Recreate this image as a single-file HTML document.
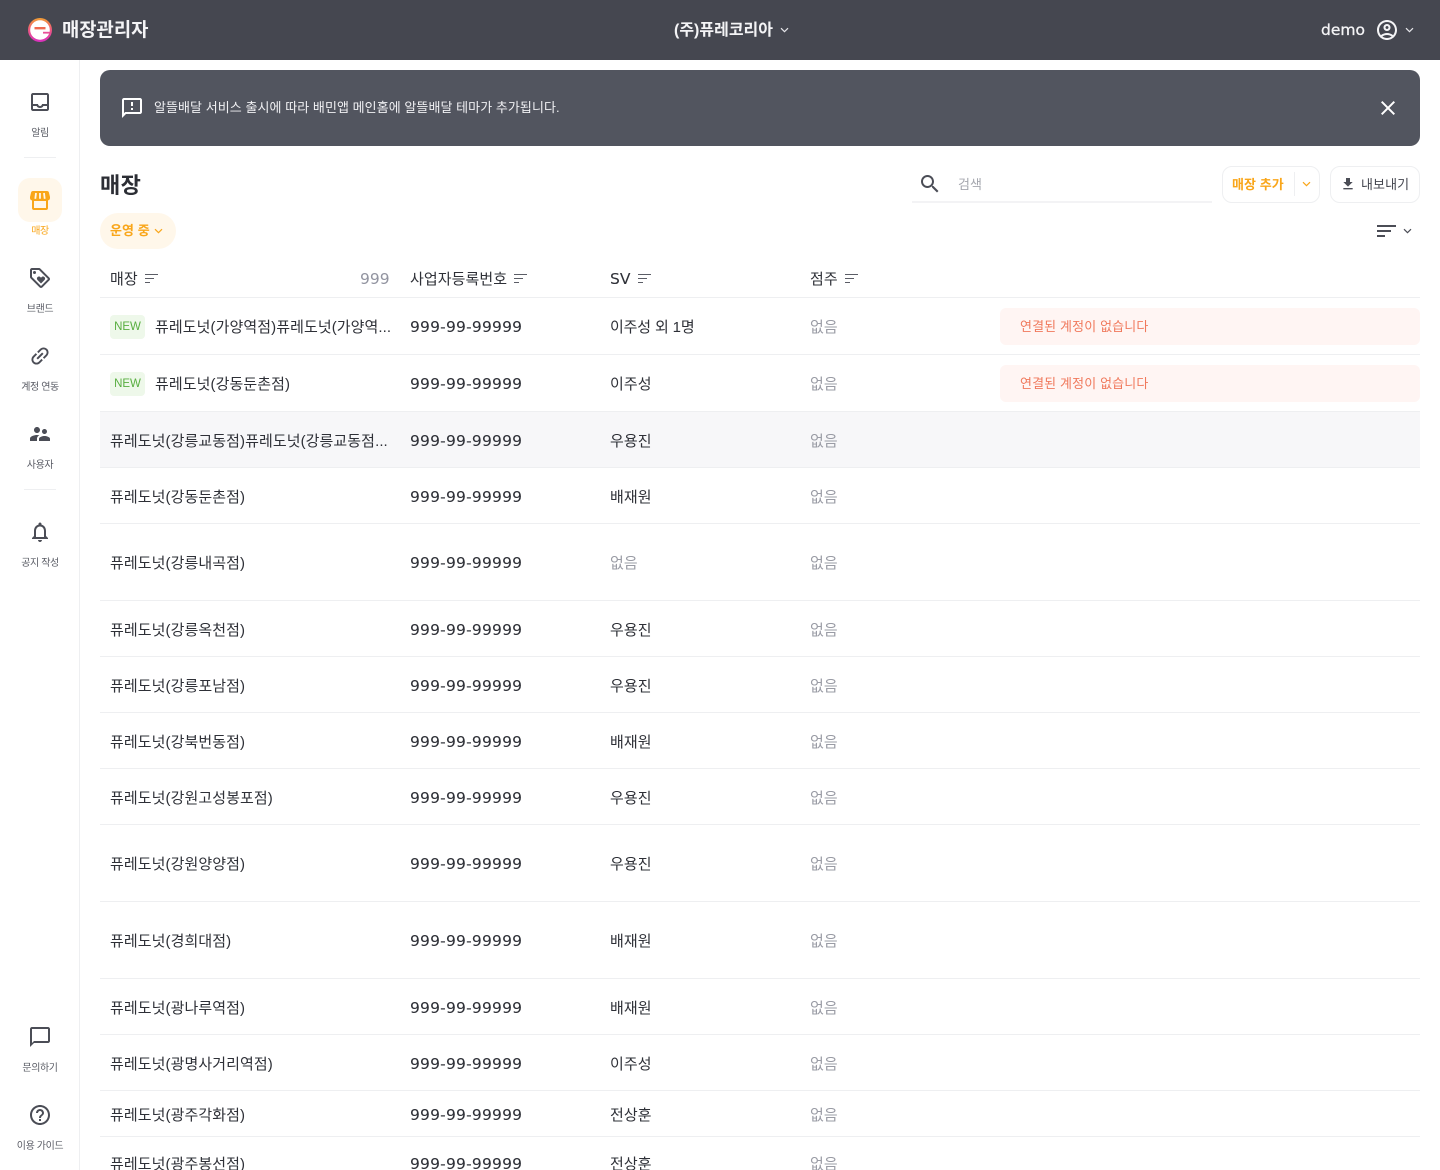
<!DOCTYPE html>
<html lang="ko"><head><meta charset="utf-8"><title>매장관리자</title>
<style>
html{margin:0;padding:0;width:1440px;height:1170px;overflow:hidden;background:#fff}
body{margin:0;padding:0;background:#fff;width:1440px;height:1170px;position:relative;overflow:hidden;font-family:"Liberation Sans","Noto Sans CJK KR",sans-serif;color:#2e3037}
#p{left:0;top:0;width:1440px;height:1170px;overflow:hidden}
div,span,svg{position:absolute}
.t{font-size:15px;line-height:24px;white-space:nowrap;font-family:"Liberation Sans","Noto Sans CJK KR",sans-serif;margin-top:2px;letter-spacing:.08px}
.n{font-size:15.5px;line-height:24px;white-space:nowrap;font-family:"DejaVu Sans",sans-serif;letter-spacing:.2px;left:410px;margin-top:1px;-webkit-text-stroke:.06px #2e3037}
.g{color:#9a9ca5}
.c1{left:110px}.c3{left:610px}.c4{left:810px}
.hr{left:100px;width:1320px;height:1px;background:#eeeff1}
.sl{width:80px;left:0;text-align:center;font-size:10px;line-height:14px;color:#5a5c65;letter-spacing:-.4px;font-family:"Noto Sans CJK KR",sans-serif;white-space:nowrap}
.si{left:28px;width:24px;height:24px;fill:#4b4d56}
.new{left:110px;width:35px;height:24px;border-radius:4px;background:#eef8ea;color:#58ae40;font-size:11.5px;line-height:24px;text-align:center}
.al{left:1000px;width:420px;height:37px;border-radius:6px;background:#fff5f3}
.al span{left:20px;top:6px;color:#f0795c;font-size:13px;line-height:24px;letter-spacing:.13px;white-space:nowrap;font-family:"Noto Sans CJK KR",sans-serif}
.ch{fill:none;stroke-width:1.2}
.bar{background:#5b5d66;height:1px}
</style></head><body><div id="p">

<div style="left:0;top:0;width:1440px;height:60px;background:#454750"></div>
<svg style="left:28px;top:18px" width="24" height="24" viewBox="0 0 24 24"><defs><linearGradient id="lg" x1="0" y1="0" x2="0" y2="1"><stop offset="0" stop-color="#f2a033"/><stop offset=".45" stop-color="#ef5d7a"/><stop offset="1" stop-color="#d92fc0"/></linearGradient></defs><circle cx="12" cy="12" r="12" fill="url(#lg)"/><circle cx="12" cy="12" r="9.800" fill="#fff"/><rect x="6.500" y="9" width="11" height="2.400" fill="#ef6a50"/><rect x="15" y="13.800" width="7" height="1.800" fill="#e8509a"/></svg>
<div class="t" style="left:62px;top:15px;font-size:18.800px;line-height:26px;font-weight:700;color:#f4f4f6;letter-spacing:0">매장관리자</div>
<div class="t" style="left:674px;top:17px;font-size:16px;font-weight:700;color:#f4f4f6;letter-spacing:0">(주)퓨레코리아</div>
<svg style="left:779px;top:25px" width="11" height="10" viewBox="0 0 11 10"><path class="ch" stroke="#e6e6ea" d="M2 3.200l3.500 3.500 3.500-3.500"/></svg>
<div style="left:1321px;top:18px;font-size:15.500px;line-height:24px;font-family:'DejaVu Sans',sans-serif;color:#f4f4f6;-webkit-text-stroke:.3px #f4f4f6">demo</div>
<svg style="left:1375px;top:18px" width="24" height="24" viewBox="0 0 24 24" fill="#f4f4f6"><path d="M12 2C6.480 2 2 6.480 2 12s4.480 10 10 10 10-4.480 10-10S17.520 2 12 2zM7.350 18.500C8.660 17.560 10.260 17 12 17s3.340.56 4.650 1.500C15.340 19.440 13.740 20 12 20s-3.340-.56-4.650-1.500zm10.790-1.380C16.450 15.800 14.320 15 12 15s-4.450.8-6.140 2.120C4.700 15.730 4 13.950 4 12c0-4.420 3.580-8 8-8s8 3.580 8 8c0 1.950-.7 3.730-1.860 5.120z"/><path d="M12 6c-1.930 0-3.500 1.570-3.500 3.500S10.070 13 12 13s3.500-1.570 3.500-3.500S13.930 6 12 6zm0 5c-.83 0-1.500-.67-1.500-1.500S11.170 8 12 8s1.500.67 1.500 1.500S12.830 11 12 11z"/></svg>
<svg style="left:1404px;top:25px" width="11" height="10" viewBox="0 0 11 10"><path class="ch" stroke="#e6e6ea" d="M2 3.200l3.500 3.500 3.500-3.500"/></svg>

<div style="left:79px;top:60px;width:1px;height:1110px;background:#eeeff1"></div>
<svg class="si" style="top:90px" viewBox="0 0 24 24"><path d="M19 3H5c-1.100 0-2 .9-2 2v14c0 1.100.9 2 2 2h14c1.100 0 2-.9 2-2V5c0-1.100-.9-2-2-2zm0 16H5v-3h3.560c.69 1.190 1.970 2 3.440 2s2.750-.81 3.440-2H19v3zm0-5h-4.990c0 1.100-.9 2-2 2s-2-.9-2-2H5V5h14v9z"/></svg>
<div class="sl" style="top:125px">알림</div>
<div style="left:24px;top:157px;width:32px;height:1px;background:#eeeff1"></div>
<div style="left:18px;top:178px;width:44px;height:44px;border-radius:12px;background:#fff7ea"></div>
<svg class="si" style="top:188px;fill:#f9a61a" viewBox="0 0 24 24"><path d="M5 3h14a2 2 0 0 1 1.900 1.400L22 9v1a2.500 2.500 0 0 1-2 2.400V20a2 2 0 0 1-2 2H6a2 2 0 0 1-2-2v-7.600A2.500 2.500 0 0 1 2 10V9l1.100-4.600A2 2 0 0 1 5 3z"/><rect x="6" y="13" width="12" height="7" fill="#fff7ea"/><path d="M8 5 7.300 10.800M12 5v5.800M16 5l.7 5.800" stroke="#fff7ea" stroke-width="1.800" fill="none"/></svg>
<div class="sl" style="top:223px;color:#f9a61a">매장</div>
<svg class="si" style="top:266px" viewBox="0 0 24 24"><path d="M21.410 11.580l-9-9C12.050 2.220 11.550 2 11 2H4c-1.100 0-2 .9-2 2v7c0 .55.22 1.050.59 1.420l9 9c.36.36.86.58 1.410.58s1.050-.22 1.410-.59l7-7c.37-.36.59-.86.59-1.410s-.23-1.060-.59-1.420zM13 20.010L4 11V4h7v-.01l9 8.990-7 7.030z"/><circle cx="6.500" cy="6.500" r="1.500"/><path d="M8.900 12.550c0 .57.23 1.070.6 1.450l3.500 3.500 3.500-3.500c.37-.37.6-.89.6-1.450 0-1.130-.92-2.050-2.050-2.050-.57 0-1.080.23-1.450.61l-.6.6-.6-.59c-.37-.38-.89-.61-1.450-.61-1.130 0-2.050.92-2.050 2.040z"/></svg>
<div class="sl" style="top:301px">브랜드</div>
<svg class="si" style="top:344px" viewBox="0 0 24 24"><path transform="rotate(-45 12 12)" d="M3.900 12c0-1.710 1.390-3.100 3.100-3.100h4V7H7c-2.760 0-5 2.240-5 5s2.240 5 5 5h4v-1.900H7c-1.710 0-3.100-1.390-3.100-3.100zM8 13h8v-2H8v2zm9-6h-4v1.900h4c1.710 0 3.100 1.390 3.100 3.100s-1.390 3.100-3.100 3.100h-4V17h4c2.760 0 5-2.240 5-5s-2.240-5-5-5z"/></svg>
<div class="sl" style="top:379px">계정 연동</div>
<svg class="si" style="top:422px" viewBox="0 0 24 24"><path d="M16.500 12c1.380 0 2.490-1.120 2.490-2.500S17.880 7 16.500 7C15.120 7 14 8.120 14 9.500s1.120 2.500 2.500 2.500zM9 11c1.660 0 2.990-1.340 2.990-3S10.660 5 9 5C7.340 5 6 6.340 6 8s1.340 3 3 3zm7.500 3c-1.830 0-5.500.92-5.500 2.750V19h11v-2.250c0-1.830-3.670-2.750-5.500-2.750zM9 13c-2.330 0-7 1.170-7 3.500V19h7v-2.250c0-.85.33-2.340 2.370-3.470C10.500 13.100 9.660 13 9 13z"/></svg>
<div class="sl" style="top:457px">사용자</div>
<div style="left:24px;top:489px;width:32px;height:1px;background:#eeeff1"></div>
<svg class="si" style="top:520px" viewBox="0 0 24 24"><path d="M12 22c1.100 0 2-.9 2-2h-4c0 1.100.9 2 2 2zm6-6v-5c0-3.070-1.630-5.640-4.500-6.320V4c0-.83-.67-1.500-1.500-1.500s-1.500.67-1.500 1.500v.68C7.640 5.360 6 7.920 6 11v5l-2 2v1h16v-1l-2-2zm-2 1H8v-6c0-2.480 1.510-4.500 4-4.500s4 2.020 4 4.500v6z"/></svg>
<div class="sl" style="top:555px">공지 작성</div>
<svg class="si" style="top:1025px" viewBox="0 0 24 24"><path d="M20 2H4c-1.100 0-2 .9-2 2v18l4-4h14c1.100 0 2-.9 2-2V4c0-1.100-.9-2-2-2zm0 14H6l-2 2V4h16v12z"/></svg>
<div class="sl" style="top:1060px">문의하기</div>
<svg class="si" style="top:1103px" viewBox="0 0 24 24"><path d="M11 18h2v-2h-2v2zm1-16C6.480 2 2 6.480 2 12s4.480 10 10 10 10-4.480 10-10S17.520 2 12 2zm0 18c-4.410 0-8-3.590-8-8s3.590-8 8-8 8 3.590 8 8-3.590 8-8 8zm0-14c-2.210 0-4 1.790-4 4h2c0-1.100.9-2 2-2s2 .9 2 2c0 2-3 1.750-3 5h2c0-2.250 3-2.500 3-5 0-2.210-1.790-4-4-4z"/></svg>
<div class="sl" style="top:1138px">이용 가이드</div>

<div style="left:100px;top:70px;width:1320px;height:76px;border-radius:10px;background:#52555f"></div>
<svg style="left:120px;top:96px" width="24" height="24" viewBox="0 0 24 24" fill="#fff"><path d="M20 2H4c-1.100 0-1.990.9-1.990 2L2 22l4-4h14c1.100 0 2-.9 2-2V4c0-1.100-.9-2-2-2zm0 14H5.170L4 17.170V4h16v12zM11 12h2v2h-2zm0-6h2v4h-2z"/></svg>
<div class="t" style="left:154px;top:94px;font-size:13px;color:#f0f0f3;letter-spacing:.06px">알뜰배달 서비스 출시에 따라 배민앱 메인홈에 알뜰배달 테마가 추가됩니다.</div>
<svg style="left:1376px;top:96px" width="24" height="24" viewBox="0 0 24 24" fill="#fff"><path d="M19 6.410L17.590 5 12 10.590 6.410 5 5 6.410 10.590 12 5 17.590 6.410 19 12 13.410 17.590 19 19 17.590 13.410 12z"/></svg>

<div class="t" style="left:100px;top:168px;font-size:22px;line-height:32px;font-weight:700;color:#2c2e35;letter-spacing:.4px">매장</div>
<svg style="left:918px;top:172px;fill:#4b4d56" width="24" height="24" viewBox="0 0 24 24"><path d="M15.500 14h-.79l-.28-.27C15.410 12.590 16 11.110 16 9.500 16 5.910 13.090 3 9.500 3S3 5.910 3 9.500 5.910 16 9.500 16c1.610 0 3.090-.59 4.230-1.570l.27.28v.79l5 4.990L20.490 19l-4.990-5zm-6 0C7.010 14 5 11.990 5 9.500S7.010 5 9.500 5 14 7.010 14 9.500 11.990 14 9.500 14z"/></svg>
<div class="t g" style="left:958px;top:171px;font-size:13px;color:#a5a7ae">검색</div>
<div style="left:912px;top:201px;width:300px;height:2px;background:#f3f3f5"></div>
<div style="left:1222px;top:166px;width:96px;height:35px;border:1px solid #eeeff1;border-radius:10px"></div>
<div class="t" style="left:1232px;top:171px;font-size:13px;font-weight:700;color:#f9a61a">매장 추가</div>
<div style="left:1294px;top:172px;width:1px;height:24px;background:#eeeff1"></div>
<svg style="left:1301px;top:179px" width="11" height="10" viewBox="0 0 11 10"><path class="ch" stroke="#f9a61a" d="M2 3.200l3.500 3.500 3.500-3.500"/></svg>
<div style="left:1330px;top:166px;width:88px;height:35px;border:1px solid #eeeff1;border-radius:10px"></div>
<svg style="left:1340px;top:176px;fill:#4b4d56" width="16" height="16" viewBox="0 0 24 24"><path d="M5 20h14v-2H5v2zM19 9h-4V3H9v6H5l7 7 7-7z"/></svg>
<div class="t" style="left:1361px;top:171px;font-size:13px;color:#44464f">내보내기</div>

<div style="left:100px;top:213px;width:76px;height:36px;border-radius:18px;background:#fff7ea"></div>
<div class="t" style="left:110px;top:217px;font-size:13px;font-weight:700;color:#f9a61a">운영 중</div>
<svg style="left:153px;top:226px" width="11" height="10" viewBox="0 0 11 10"><path class="ch" stroke="#f9a61a" d="M2 3.200l3.500 3.500 3.500-3.500"/></svg>
<div style="left:1377px;top:225px;width:19px;height:2px;background:#4b4d56"></div>
<div style="left:1377px;top:230px;width:14px;height:2px;background:#4b4d56"></div>
<div style="left:1377px;top:235px;width:8px;height:2px;background:#4b4d56"></div>
<svg style="left:1402px;top:226px" width="11" height="10" viewBox="0 0 11 10"><path class="ch" stroke="#4b4d56" d="M2 3.200l3.500 3.500 3.500-3.500"/></svg>

<div class="t" style="left:110px;top:266px">매장</div>
<div class="bar" style="left:145px;top:274px;width:13px"></div><div class="bar" style="left:145px;top:278px;width:9px"></div><div class="bar" style="left:145px;top:282px;width:5px"></div>
<div class="n" style="left:360px;top:266px;color:#9294a0;letter-spacing:0;-webkit-text-stroke:0">999</div>
<div class="t" style="left:410px;top:266px">사업자등록번호</div>
<div class="bar" style="left:514px;top:274px;width:13px"></div><div class="bar" style="left:514px;top:278px;width:9px"></div><div class="bar" style="left:514px;top:282px;width:5px"></div>
<div class="n" style="left:610px;top:266px;letter-spacing:0">SV</div>
<div class="bar" style="left:638px;top:274px;width:13px"></div><div class="bar" style="left:638px;top:278px;width:9px"></div><div class="bar" style="left:638px;top:282px;width:5px"></div>
<div class="t" style="left:810px;top:266px">점주</div>
<div class="bar" style="left:845px;top:274px;width:13px"></div><div class="bar" style="left:845px;top:278px;width:9px"></div><div class="bar" style="left:845px;top:282px;width:5px"></div>

<div style="left:100px;top:412px;width:1320px;height:55px;background:#f7f7f9"></div>
<div class="hr" style="top:297px"></div><div class="hr" style="top:354px"></div><div class="hr" style="top:411px"></div><div class="hr" style="top:467px"></div><div class="hr" style="top:523px"></div><div class="hr" style="top:600px"></div><div class="hr" style="top:656px"></div><div class="hr" style="top:712px"></div><div class="hr" style="top:768px"></div><div class="hr" style="top:824px"></div><div class="hr" style="top:901px"></div><div class="hr" style="top:978px"></div><div class="hr" style="top:1034px"></div><div class="hr" style="top:1090px"></div><div class="hr" style="top:1136px"></div>

<div class="new" style="top:315px">NEW</div>
<div class="t" style="left:155px;top:314px">퓨레도넛(가양역점)퓨레도넛(가양역...</div>
<div class="n" style="top:314px">999-99-99999</div><div class="t c3" style="top:314px;letter-spacing:-.15px">이주성 외 1명</div><div class="t c4 g" style="top:314px">없음</div>
<div class="al" style="top:308px"><span>연결된 계정이 없습니다</span></div>

<div class="new" style="top:372px">NEW</div>
<div class="t" style="left:155px;top:371px">퓨레도넛(강동둔촌점)</div>
<div class="n" style="top:371px">999-99-99999</div><div class="t c3" style="top:371px">이주성</div><div class="t c4 g" style="top:371px">없음</div>
<div class="al" style="top:365px"><span>연결된 계정이 없습니다</span></div>

<div class="t c1" style="top:428px">퓨레도넛(강릉교동점)퓨레도넛(강릉교동점...</div>
<div class="n" style="top:428px">999-99-99999</div><div class="t c3" style="top:428px">우용진</div><div class="t c4 g" style="top:428px">없음</div>

<div class="t c1" style="top:484px">퓨레도넛(강동둔촌점)</div><div class="n" style="top:484px">999-99-99999</div><div class="t c3" style="top:484px">배재원</div><div class="t c4 g" style="top:484px">없음</div>
<div class="t c1" style="top:550px">퓨레도넛(강릉내곡점)</div><div class="n" style="top:550px">999-99-99999</div><div class="t c3 g" style="top:550px">없음</div><div class="t c4 g" style="top:550px">없음</div>
<div class="t c1" style="top:617px">퓨레도넛(강릉옥천점)</div><div class="n" style="top:617px">999-99-99999</div><div class="t c3" style="top:617px">우용진</div><div class="t c4 g" style="top:617px">없음</div>
<div class="t c1" style="top:673px">퓨레도넛(강릉포남점)</div><div class="n" style="top:673px">999-99-99999</div><div class="t c3" style="top:673px">우용진</div><div class="t c4 g" style="top:673px">없음</div>
<div class="t c1" style="top:729px">퓨레도넛(강북번동점)</div><div class="n" style="top:729px">999-99-99999</div><div class="t c3" style="top:729px">배재원</div><div class="t c4 g" style="top:729px">없음</div>
<div class="t c1" style="top:785px">퓨레도넛(강원고성봉포점)</div><div class="n" style="top:785px">999-99-99999</div><div class="t c3" style="top:785px">우용진</div><div class="t c4 g" style="top:785px">없음</div>
<div class="t c1" style="top:851px">퓨레도넛(강원양양점)</div><div class="n" style="top:851px">999-99-99999</div><div class="t c3" style="top:851px">우용진</div><div class="t c4 g" style="top:851px">없음</div>
<div class="t c1" style="top:928px">퓨레도넛(경희대점)</div><div class="n" style="top:928px">999-99-99999</div><div class="t c3" style="top:928px">배재원</div><div class="t c4 g" style="top:928px">없음</div>
<div class="t c1" style="top:995px">퓨레도넛(광나루역점)</div><div class="n" style="top:995px">999-99-99999</div><div class="t c3" style="top:995px">배재원</div><div class="t c4 g" style="top:995px">없음</div>
<div class="t c1" style="top:1051px">퓨레도넛(광명사거리역점)</div><div class="n" style="top:1051px">999-99-99999</div><div class="t c3" style="top:1051px">이주성</div><div class="t c4 g" style="top:1051px">없음</div>
<div class="t c1" style="top:1102px">퓨레도넛(광주각화점)</div><div class="n" style="top:1102px">999-99-99999</div><div class="t c3" style="top:1102px">전상훈</div><div class="t c4 g" style="top:1102px">없음</div>
<div class="t c1" style="top:1151px">퓨레도넛(광주봉선점)</div><div class="n" style="top:1151px">999-99-99999</div><div class="t c3" style="top:1151px">전상훈</div><div class="t c4 g" style="top:1151px">없음</div>
</div></body></html>
